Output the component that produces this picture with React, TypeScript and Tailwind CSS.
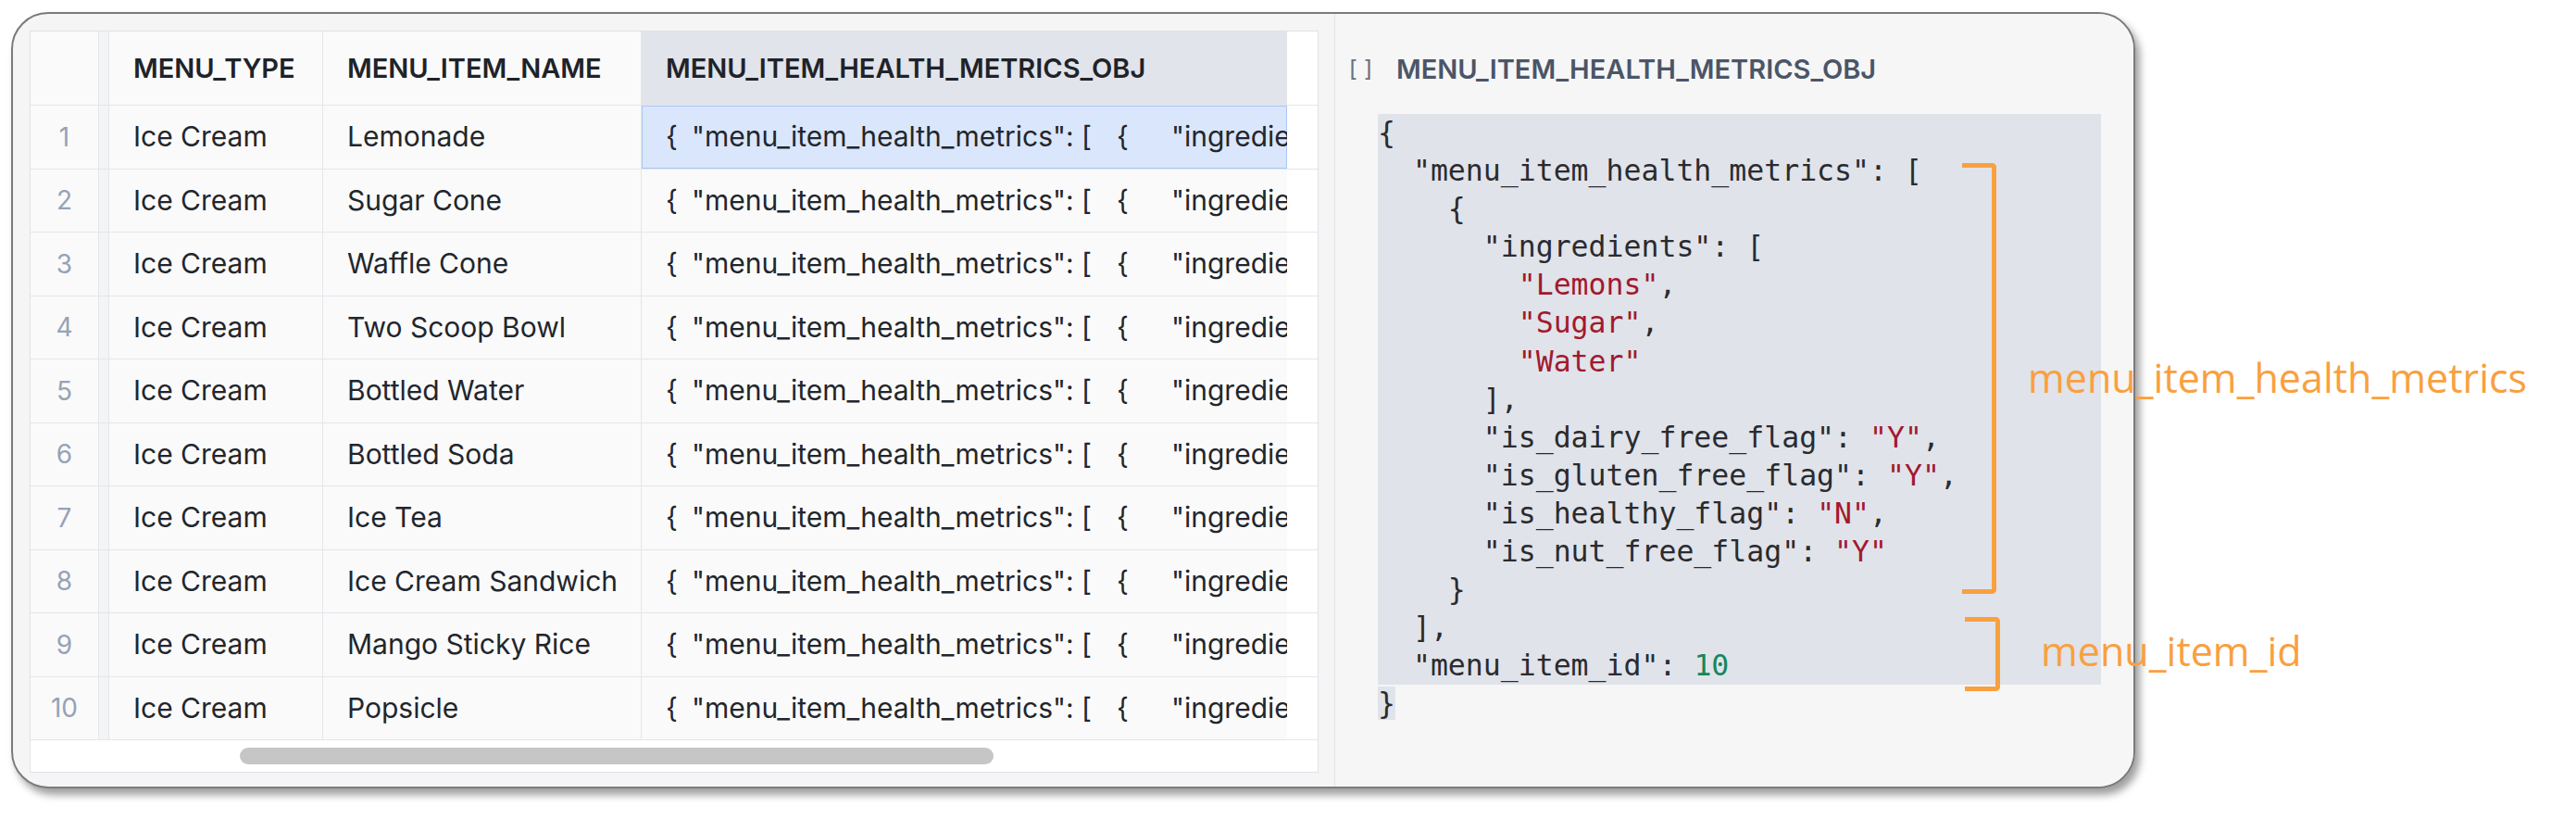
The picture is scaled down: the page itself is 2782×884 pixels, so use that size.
import React from "react";

const rows = [
  "Lemonade",
  "Sugar Cone",
  "Waffle Cone",
  "Two Scoop Bowl",
  "Bottled Water",
  "Bottled Soda",
  "Ice Tea",
  "Ice Cream Sandwich",
  "Mango Sticky Rice",
  "Popsicle",
];

type Tok = { t: string; c?: "k" | "s" | "n" };
const L = (indent: number, ...toks: Tok[]) => ({ indent, toks });
const codeLines = [
  L(0, { t: "{" }),
  L(1, { t: '"menu_item_health_metrics": [' }),
  L(2, { t: "{" }),
  L(3, { t: '"ingredients": [' }),
  L(4, { t: '"Lemons"', c: "s" }, { t: "," }),
  L(4, { t: '"Sugar"', c: "s" }, { t: "," }),
  L(4, { t: '"Water"', c: "s" }),
  L(3, { t: "]," }),
  L(3, { t: '"is_dairy_free_flag": ' }, { t: '"Y"', c: "s" }, { t: "," }),
  L(3, { t: '"is_gluten_free_flag": ' }, { t: '"Y"', c: "s" }, { t: "," }),
  L(3, { t: '"is_healthy_flag": ' }, { t: '"N"', c: "s" }, { t: "," }),
  L(3, { t: '"is_nut_free_flag": ' }, { t: '"Y"', c: "s" }),
  L(2, { t: "}" }),
  L(1, { t: "]," }),
  L(1, { t: '"menu_item_id": ' }, { t: "10", c: "n" }),
];

function Tokens({ toks }: { toks: Tok[] }) {
  return (
    <>
      {toks.map((tk, i) => (
        <span
          key={i}
          className={
            tk.c === "s"
              ? "text-[#a3182f]"
              : tk.c === "n"
              ? "text-[#17875a]"
              : "text-[#2a2b2e]"
          }
        >
          {tk.t}
        </span>
      ))}
    </>
  );
}

export default function App() {
  return (
    <div className="relative w-[2782px] h-[884px] overflow-hidden bg-white pl-[12px] pt-[13px] font-['Inter',sans-serif]">
      {/* Card */}
      <div className="flex w-[2294px] h-[838px] rounded-[40px] border-2 border-[#7b7b7b] bg-[#f5f5f5] shadow-[5px_7px_9px_rgba(0,0,0,0.38)] overflow-hidden">
        {/* Left pane: table */}
        <div className="shrink-0 pl-[18px] pr-[17px] pt-[18px]">
          <div className="w-[1392px] h-[801px] border border-[#dde2ea] bg-[#fafafa] flex flex-col">
            {/* header */}
            <div className="flex h-[80px] shrink-0 border-b border-[#e4e6ea] text-[29px] font-semibold text-[#1f2329]">
              <div className="w-[74px] shrink-0 border-r border-[#e4e6ea]" />
              <div className="w-[11px] shrink-0 bg-[#f3f4f6] border-r border-[#e4e6ea]" />
              <div className="w-[231px] shrink-0 flex items-center pl-[26px] border-r border-[#e4e6ea]">
                MENU_TYPE
              </div>
              <div className="w-[344px] shrink-0 flex items-center pl-[26px] border-r border-[#e4e6ea]">
                MENU_ITEM_NAME
              </div>
              <div className="w-[697px] shrink-0 flex items-center pl-[26px] bg-[#e1e4ea]">
                MENU_ITEM_HEALTH_METRICS_OBJ
              </div>
              <div className="w-[33px] shrink-0 bg-white" />
            </div>
            {/* rows */}
            {rows.map((name, i) => (
              <div
                key={i}
                className="flex h-[68.5px] shrink-0 border-b border-[#e4e6ea] text-[30px] text-[#22262c]"
              >
                <div className="w-[74px] shrink-0 flex items-center justify-center border-r border-[#e4e6ea] text-[28px] text-[#96a2b6]">
                  {i + 1}
                </div>
                <div className="w-[11px] shrink-0 bg-[#f3f4f6] border-r border-[#e4e6ea]" />
                <div className="w-[231px] shrink-0 flex items-center pl-[26px] border-r border-[#e4e6ea] whitespace-nowrap">
                  Ice Cream
                </div>
                <div className="w-[344px] shrink-0 flex items-center pl-[26px] border-r border-[#e4e6ea] whitespace-nowrap">
                  {name}
                </div>
                <div
                  className={
                    "w-[697px] shrink-0 flex items-center pl-[26px] overflow-hidden whitespace-nowrap " +
                    (i === 0
                      ? "bg-[#dae6fb] shadow-[inset_0_0_0_1px_#a9c8f4]"
                      : "")
                  }
                >
                  <span className="inline-block w-[28px] shrink-0">{"{"}</span>
                  <span className="inline-block w-[459px] shrink-0">
                    "menu_item_health_metrics": [
                  </span>
                  <span className="inline-block w-[59px] shrink-0">{"{"}</span>
                  <span className="shrink-0">"ingredie</span>
                </div>
                <div className="w-[33px] shrink-0 bg-white" />
              </div>
            ))}
            {/* horizontal scrollbar */}
            <div className="flex-1 bg-white flex items-center pl-[226px]">
              <div className="w-[814px] h-[18px] rounded-full bg-[#c6c6c6]" />
            </div>
          </div>
        </div>

        {/* Right pane: detail */}
        <div className="flex-1 border-l border-[#e1e3e8] bg-[#f6f6f6] pl-[12px] pt-[42px]">
          <div className="flex items-center h-[36px] gap-[21px]">
            <span className="font-['DejaVu_Sans_Mono',monospace] text-[24px] text-[#6b7280] tracking-[2px]">
              []
            </span>
            <span className="text-[29px] font-semibold text-[#4b5568]">
              MENU_ITEM_HEALTH_METRICS_OBJ
            </span>
          </div>
          <div className="ml-[34px] mt-[30px] font-['DejaVu_Sans_Mono',monospace] text-[31.5px] leading-[41.1px] whitespace-pre">
            <div className="w-[781px] bg-[#e0e3ea]">
              {codeLines.map((ln, i) => (
                <div key={i}>
                  {"  ".repeat(ln.indent)}
                  <Tokens toks={ln.toks} />
                </div>
              ))}
            </div>
            <div>
              <span className="bg-[#e0e3ea] text-[#2a2b2e]">{"}"}</span>
            </div>
          </div>
        </div>
      </div>

      {/* Orange annotations */}
      <div className="absolute left-[2119px] top-[176px] w-[37px] h-[465px] border-[5px] border-l-0 border-[#f9a03f] rounded-r-[5px]" />
      <div className="absolute left-[2190px] top-[378px] text-[43px] leading-[60px] text-[#f9a03f] font-['Open_Sans',sans-serif]">
        menu_item_health_metrics
      </div>
      <div className="absolute left-[2122px] top-[666px] w-[38px] h-[80px] border-[5px] border-l-0 border-[#f9a03f] rounded-r-[5px]" />
      <div className="absolute left-[2204px] top-[673px] text-[43px] leading-[60px] text-[#f9a03f] font-['Open_Sans',sans-serif]">
        menu_item_id
      </div>
    </div>
  );
}
